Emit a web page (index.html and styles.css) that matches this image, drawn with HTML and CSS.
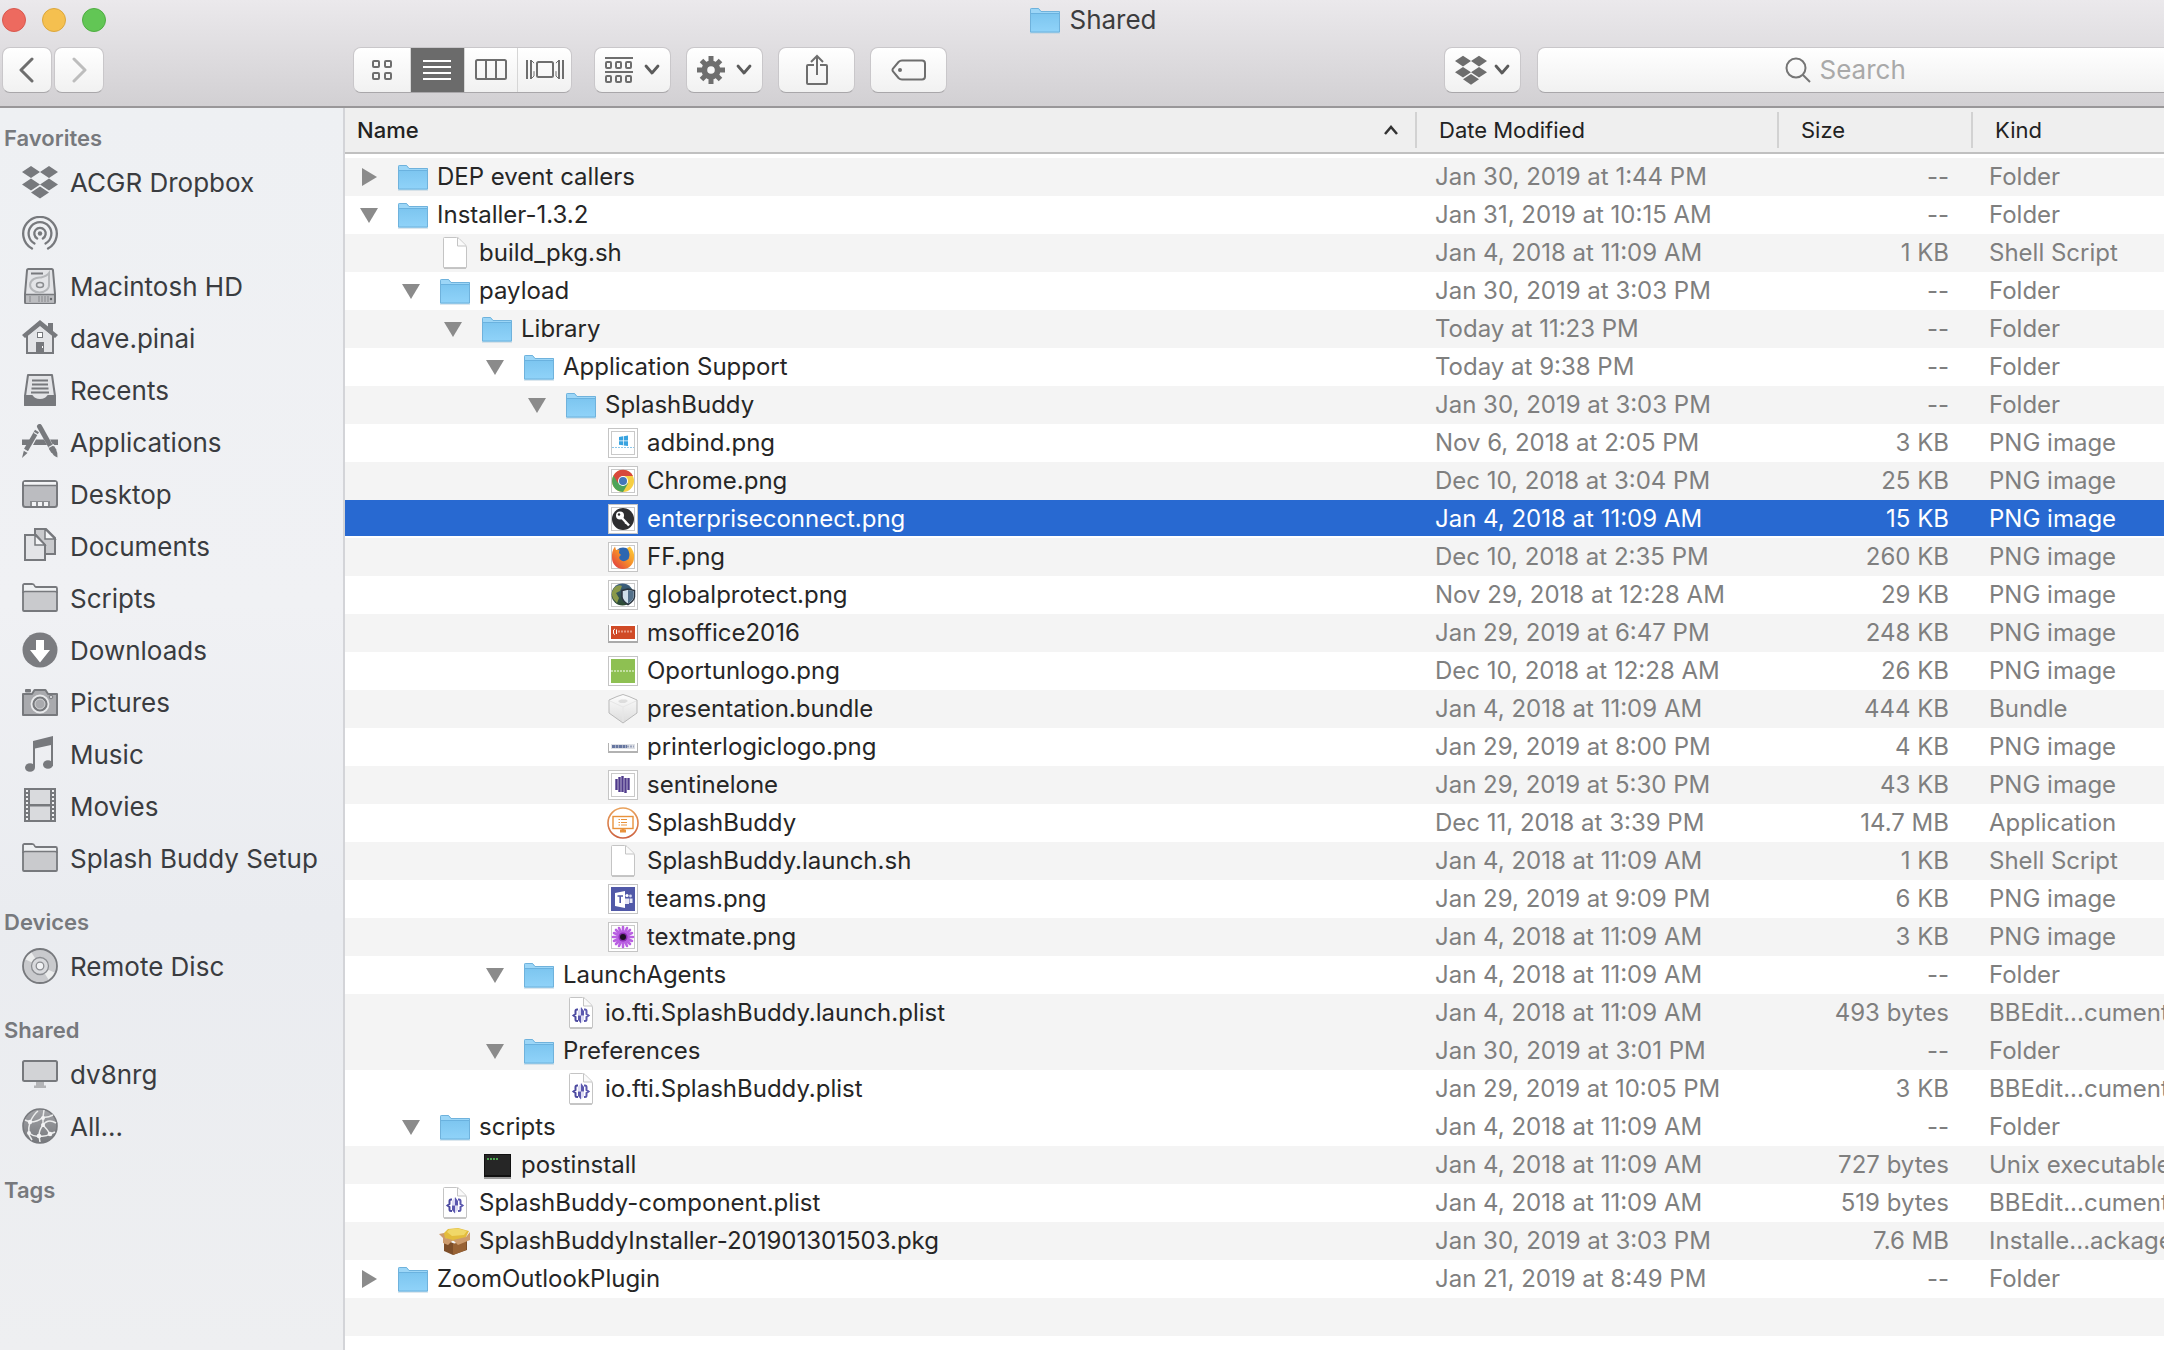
FILE: index.html
```html
<!DOCTYPE html>
<html lang="en">
<head>
<meta charset="utf-8">
<title>Shared</title>
<link rel="stylesheet" href="styles.css">
</head>
<body>
<svg class="sprite" aria-hidden="true">
  <defs>
    <linearGradient id="g-folder" x1="0" y1="0" x2="0" y2="1"><stop offset="0" stop-color="#7cc5ef"/><stop offset="1" stop-color="#90d3f9"/></linearGradient>
    <linearGradient id="g-ff" x1="1" y1="0" x2="0" y2="1"><stop offset="0" stop-color="#ffd53a"/><stop offset=".5" stop-color="#f58a2a"/><stop offset="1" stop-color="#dd2f45"/></linearGradient>
    <linearGradient id="g-globe" x1="0" y1="0" x2="0" y2="1"><stop offset="0" stop-color="#3c5f83"/><stop offset="1" stop-color="#2c4a2e"/></linearGradient>
    <linearGradient id="g-cube" x1="0" y1="0" x2="0" y2="1"><stop offset="0" stop-color="#fdfdfd"/><stop offset="1" stop-color="#dcdcdc"/></linearGradient>
    <linearGradient id="g-sb" x1="0" y1="0" x2="0" y2="1"><stop offset="0" stop-color="#e9a15a"/><stop offset="1" stop-color="#cd6240"/></linearGradient>
    <linearGradient id="g-net" x1="0" y1="0" x2="0" y2="1"><stop offset="0" stop-color="#a3a4a8"/><stop offset="1" stop-color="#77797d"/></linearGradient>
    <symbol id="folder" viewBox="0 0 32 32">
      <path d="M1 28.500H31V29.500H1z" fill="#b9cfdc"/>
      <path d="M1 5.500Q1 4 2.500 4H9.500L12 7H30Q31 7 31 8V28H1z" fill="#9cd6f7"/>
      <path d="M1 9H31V27.500Q31 28.500 30 28.500H2Q1 28.500 1 27.500z" fill="url(#g-folder)"/>
      <path d="M1.500 28V5.500Q1.500 4.500 2.500 4.500H9.500L12 7.500H30.500V28z" fill="none" stroke="#6fb2dc"/>
      <path d="M2 9.500H30" stroke="#6ab2df"/>
    </symbol>
    <symbol id="doc" viewBox="0 0 32 32">
      <path d="M4.500 1.500Q4.500 .5 5.500 .5H17.500Q19 .5 20 1.500L26.500 8Q27.500 9 27.500 11V30Q27.500 31 26.500 31H5.500Q4.500 31 4.500 30z" fill="#fff" stroke="#c4c4c4"/>
      <path d="M18.500 1V9H27" fill="#fafafa" stroke="#c4c4c4"/>
      <path d="M5 31H27" stroke="#aaa"/>
    </symbol>
    <symbol id="plist" viewBox="0 0 32 32">
      <use href="#doc"/>
      <path d="M13 12.500H12Q10.500 12.500 10.500 14V17L8.500 18.500L10.500 20V22.500Q10.500 24 12 24H13" fill="none" stroke="#4b499f" stroke-width="2"/>
      <path d="M19 12.500H20Q21.500 12.500 21.500 14V17L23.500 18.500L21.500 20V22.500Q21.500 24 20 24H19" fill="none" stroke="#5a57ae" stroke-width="2"/>
      <path d="M16 10L13 14V18.500H16zM16 18.500H19V23L16 26.500z" fill="#dcdbf3"/>
      <path d="M16 10L19 14V18.500H16zM13 18.500H16V26.500L13 23z" fill="#5a57ae"/>
    </symbol>
    <symbol id="frame" viewBox="0 0 32 32">
      <rect x="1" y="2" width="30" height="29" rx="1" fill="#000" opacity=".2"/>
      <rect x="1" y="30" width="30" height="1" fill="#777"/>
      <rect x="2" y="2" width="28" height="28" fill="#fff"/>
      <rect x="1.500" y="1.500" width="29" height="29" fill="none" stroke="#c5c5c5"/>
      <rect x="4.500" y="4.500" width="23" height="23" fill="none" stroke="#c9c9c9"/>
    </symbol>
    <symbol id="adbind" viewBox="0 0 32 32"><use href="#frame"/><path d="M12 10L16 9.300V13.500H12zM16.700 9.200L21 8.500V13.500H16.700zM12 14.200H16V18.300L12 17.700zM16.700 14.200H21V19L16.700 18.400z" fill="#38a3e0"/><path d="M5 20.500H27" stroke="#8cc7ea" stroke-dasharray="2 1"/></symbol>
    <symbol id="chrome" viewBox="0 0 32 32"><use href="#frame"/>
      <circle cx="16" cy="16" r="11" fill="#f6cf42"/>
      <path d="M16 16L6.500 10.500A11 11 0 0 0 16 27L21 18.500z" fill="#4ea35a"/>
      <path d="M6.500 10.500A11 11 0 0 1 26 11H16L11 18z" fill="#d8483b"/>
      <circle cx="16" cy="16" r="5" fill="#fff"/><circle cx="16" cy="16" r="4" fill="#4477b8"/></symbol>
    <symbol id="keyicon" viewBox="0 0 32 32"><use href="#frame"/><circle cx="16" cy="16" r="11" fill="#2e2e30"/><circle cx="13" cy="12.500" r="4" fill="#fff"/><circle cx="12" cy="11.500" r="1.200" fill="#2e2e30"/><path d="M14.500 14.500L22 22.500" stroke="#fff" stroke-width="2.500"/><path d="M18 20.500L19.500 19" stroke="#fff" stroke-width="1.500"/></symbol>
    <symbol id="firefox" viewBox="0 0 32 32"><use href="#frame"/>
      <circle cx="16" cy="15" r="8.500" fill="#2c66b0"/>
      <path d="M8 5.500L9 9L12.500 8.500L12 12L14 14Q11 16 13 18.500Q17 22 21.500 18Q24 13 20 7Q22 6 23 5.500Q28 11 27 17A11 11 0 0 1 5 17Q4.500 10 8 5.500z" fill="url(#g-ff)"/></symbol>
    <symbol id="globe-shield" viewBox="0 0 32 32"><use href="#frame"/>
      <circle cx="15.500" cy="15.500" r="11" fill="url(#g-globe)"/>
      <path d="M7 9Q11 5 15 7L13 12L9 14L12 19L10 24Q4 19 5 13z" fill="#8a994a"/>
      <path d="M15 11.500L21 10L27.500 11.500V18Q27 22 21 25.500Q15.500 22 15 18z" fill="#cfe0ea" stroke="#2b3540" stroke-width="1.500"/><path d="M21 11V24.500Q26 21 26.500 18V12z" fill="#54718a"/></symbol>
    <symbol id="office" viewBox="0 0 32 32">
      <rect x="1" y="8" width="30" height="18" fill="#000" opacity=".3"/><rect x="2" y="7" width="28" height="17" fill="#fff"/>
      <rect x="4" y="9" width="24" height="13" fill="#d04a26"/><path d="M8 12L6.500 13V16.500L8 17.500M9.500 12.500V17" stroke="#fff" fill="none"/><path d="M11 14.500H26" stroke="#e89a84" stroke-width="2" stroke-dasharray="2 1"/></symbol>
    <symbol id="oportun" viewBox="0 0 32 32"><use href="#frame"/><rect x="4" y="4" width="24" height="24" fill="#8ec052"/><path d="M4 16H28" stroke="#c3dfa2" stroke-width="2" stroke-dasharray="2 1"/></symbol>
    <symbol id="bundle" viewBox="0 0 32 32">
      <path d="M2 7L10 3.500L16 1.500L22 3.500L30 7V20L16 30L2 20z" fill="url(#g-cube)" stroke="#b9b9b9" stroke-linejoin="round"/>
      <path d="M3 8L16 14L29 8M16 14V29" fill="none" stroke="#e6e6e6"/><path d="M11 8L14 6.500H19L21 8L18 10H13z" fill="#ddd"/></symbol>
    <symbol id="printer" viewBox="0 0 32 32"><rect x="1" y="12" width="30" height="10" fill="#000" opacity=".3"/><rect x="2" y="11" width="28" height="9" fill="#fff"/><rect x="4" y="13" width="24" height="5" fill="#dfe1e6"/><path d="M5 15.500H20" stroke="#6676a0" stroke-width="3" stroke-dasharray="3 .5"/><path d="M20 15.500H27" stroke="#9ba5bd" stroke-width="2" stroke-dasharray="2 1"/></symbol>
    <symbol id="sentinel" viewBox="0 0 32 32"><use href="#frame"/><path d="M9.500 10V21M12.500 8V23M15.500 7V23M18.500 9V24M21.500 9V21" stroke="#4f3a8b" stroke-width="2.400"/></symbol>
    <symbol id="splash" viewBox="0 0 32 32"><circle cx="16" cy="16" r="15" fill="#fff" stroke="url(#g-sb)" stroke-width="1.600"/><rect x="6" y="9.500" width="20" height="12" fill="none" stroke="#e8923c" stroke-width="1.400"/><path d="M13 24H19M16 22V25" stroke="#e8923c" stroke-width="3"/><path d="M11.500 12.500H13M14 12.500H20M11.500 15.500H13M14 15.500H20M11.500 18H13M14 18H20" stroke="#e8923c"/></symbol>
    <symbol id="teams" viewBox="0 0 32 32"><use href="#frame"/><rect x="4" y="4" width="24" height="24" fill="#5159a8"/><path d="M8 10L18 8V25L8 23z" fill="#fff"/><path d="M10.500 13H16M13.200 13V20" stroke="#5159a8" stroke-width="1.600"/><circle cx="20" cy="12.500" r="1.600" fill="#fff"/><circle cx="23.500" cy="13" r="1.400" fill="#d5d7ee"/><path d="M18 15.500H22V21H18zM22.500 15.500H25.500V20H22.500z" fill="#e7e8f6"/></symbol>
    <symbol id="flower" viewBox="0 0 32 32"><use href="#frame"/><g stroke="#b95fe2" stroke-width="2.600" stroke-linecap="round"><path d="M16 6V26M6 16H26M9 9L23 23M23 9L9 23M12 7L20 25M20 7L12 25M7 12L25 20M7 20L25 12"/></g><circle cx="16" cy="16" r="4.500" fill="#8a2db4"/><circle cx="16" cy="16" r="3" fill="#1e1024"/></symbol>
    <symbol id="exec" viewBox="0 0 32 32"><rect x="3" y="6" width="27" height="24" fill="#9c9c9c"/><rect x="3" y="5" width="27" height="23" fill="#111"/><rect x="4" y="6" width="25" height="20" fill="#262626"/><path d="M6 10H17" stroke="#4fa653" stroke-width="2" stroke-dasharray="2 1"/></symbol>
    <symbol id="package" viewBox="0 0 32 32">
      <path d="M5 14L16 19L28 14V25L14 30L5 26z" fill="#7d4e29"/><path d="M14 19L27 15V25L14 30z" fill="#986234"/>
      <path d="M5 8L9 4L19 3L30 6L26 14L14 16L5 13z" fill="#e3bc3c"/><path d="M8 7L10 4.500L19 3.500L28 6L25 10L13 11z" fill="#f0d868"/>
      <path d="M0 9L5 8L6 13L14 15L9 20L4 18L4 13zM31 7L27 12L14 15L19 20L31 15z" fill="#cd9b6c"/></symbol>

    <symbol id="dropbox" viewBox="0 0 36 36"><path d="M9 2L18 8L9 14L0 8zM27 2L36 8L27 14L18 8zM9 14.500L18 20.500L9 26.500L0 20.500zM27 14.500L36 20.500L27 26.500L18 20.500zM18 22.500L27 28.500L18 34.500L9 28.500z" fill="currentColor"/></symbol>
    <symbol id="airdrop" viewBox="0 0 36 36"><circle cx="18" cy="17.500" r="2.200" fill="currentColor"/><g fill="none" stroke="currentColor" stroke-width="2.300" stroke-linecap="round"><path d="M15.200 22.500A5.700 5.700 0 1 1 20.800 22.500"/><path d="M12.500 27.500A11.400 11.400 0 1 1 23.500 27.500"/><path d="M10 32.500A16.800 16.800 0 1 1 26 32.500"/></g></symbol>
    <symbol id="drive" viewBox="0 0 36 36"><path d="M5 2.500Q5 1 6.500 1H29.500Q31 1 31 2.500L33 26V34Q33 35.500 31.500 35.500H4.500Q3 35.500 3 34V26z" fill="#e3e4e7" stroke="#77797d" stroke-width="2"/><path d="M4 27H32V34.500H4z" fill="#bcbdc0"/><path d="M3 26.500H33" stroke="#77797d" stroke-width="1.500"/><path d="M9 5.500H21" stroke="#77797d" stroke-width="2"/><path d="M27 5V16A9.500 7.500 0 1 1 19 9.500Q25 8 27 5z" fill="none" stroke="#b5b7ba" stroke-width="2"/><ellipse cx="18" cy="17" rx="3.500" ry="2.500" fill="none" stroke="#8c8e91" stroke-width="1.500"/><path d="M8 28V34M17 28V34M20 28V34M23 28V34M26 28V34" stroke="#88898d"/><circle cx="29" cy="31" r="1.200" fill="#66686c"/></symbol>
    <symbol id="home" viewBox="0 0 36 36"><path d="M5 15L18 4L31 15V33H5z" fill="#e3e4e7" stroke="#77797d" stroke-width="2"/><path d="M18 0L26 6.500V3H31V11L36 15L33 18L18 6L3 18L0 15z" fill="#77797d"/><rect x="15.500" y="12.500" width="5" height="5" fill="#fff" stroke="#77797d"/><path d="M14 22H22V33H14z" fill="#77797d"/><path d="M20.500 26V28" stroke="#fff"/></symbol>
    <symbol id="recents" viewBox="0 0 36 36"><path d="M6 3H30L33 24V33H3V24z" fill="#e3e4e7" stroke="#77797d" stroke-width="2" stroke-linejoin="round"/><path d="M10 8.500H26M10 12.500H26M9.500 16.500H26.500M9 20.500H27" stroke="#77797d" stroke-width="1.800"/><path d="M3 24H10Q12 28 18 28T26 24H33V33H3z" fill="#77797d" stroke="#77797d" stroke-width="2" stroke-linejoin="round"/></symbol>
    <symbol id="apps" viewBox="0 0 36 36"><path d="M0 15.500H8L5 21H0zM14 15.500H22L25 21H11zM28 15.500H36V21H31z" fill="#77797d"/><path d="M17.500 2.500L29 23" stroke="#77797d" stroke-width="5" stroke-linecap="round"/><path d="M29.500 23.500L32 27.500" stroke="#77797d" stroke-width="6"/><path d="M29 27L34 25.500Q36 29 35.500 33.500Q31 32 29 27z" fill="#77797d"/><path d="M15 7L4 26" stroke="#77797d" stroke-width="4.500"/><path d="M2 26L6 28.500L0 34z" fill="#77797d"/><path d="M12 8.500L17 11.500M26.500 23.500L32 20.500M1.500 26L6 28.500" stroke="#eef0f3" stroke-width="1.200"/></symbol>
    <symbol id="desktop" viewBox="0 0 36 36"><rect x="1" y="5" width="34" height="26" rx="2.500" fill="#bbbcc0" stroke="#77797d" stroke-width="2"/><path d="M2 6H34V9H2z" fill="#f3f4f6"/><path d="M1 9.500H35" stroke="#77797d" stroke-width="1.600"/><path d="M8 30V25H28V30z" fill="#8a8c90"/><path d="M10 26H14V30H10zM16 26H20V30H16zM22 26H26V30H22z" fill="#f3f4f6"/></symbol>
    <symbol id="documents" viewBox="0 0 36 36"><path d="M13 1H24L33 10V26H13z" fill="#c9cacd" stroke="#77797d" stroke-width="2"/><path d="M23 1V11H33z" fill="#f3f4f6" stroke="#77797d" stroke-width="1.500"/><path d="M3 7H14L23 17V32H3z" fill="#e3e4e7" stroke="#77797d" stroke-width="2"/><path d="M13 7V17H23z" fill="#f3f4f6" stroke="#77797d" stroke-width="1.500"/></symbol>
    <symbol id="sfolder" viewBox="0 0 36 36"><path d="M1 30V5.500Q1 4 2.500 4H10Q12 4 12.500 6Q13 7 14.500 7H33.500Q35 7 35 8.500V30Q35 31 34 31H2Q1 31 1 30z" fill="#c9cacd" stroke="#77797d" stroke-width="1.800"/><path d="M2 5H11L13 8H34V11H2z" fill="#eef0f2"/><path d="M1 13Q1 11.500 3 11.500H33Q35 11.500 35 13" fill="none" stroke="#77797d" stroke-width="1.600"/></symbol>
    <symbol id="downloads" viewBox="0 0 36 36"><circle cx="18" cy="18" r="17.500" fill="#7b7c80"/><path d="M14 8H22V18H28L18 30.500L8 18H14z" fill="#fff"/></symbol>
    <symbol id="camera" viewBox="0 0 36 36"><path d="M4 6H8V7.500H4zM1 10H10L12.500 6H23.500L26 10H35V31H1z" fill="#a9aaae" stroke="#77797d" stroke-width="2" stroke-linejoin="round"/><circle cx="18" cy="20" r="8.500" fill="#77797d" stroke="#e8e9eb" stroke-width="1.800"/><circle cx="18" cy="20" r="5" fill="#a9aaae" stroke="#d5d6d8"/><circle cx="29" cy="13" r="1.800" fill="#d0d1d4" stroke="#77797d"/></symbol>
    <symbol id="music" viewBox="0 0 36 36"><path d="M11 5L31 0V30H29V9L13 12.500V31H11z" fill="#77797d"/><ellipse cx="8" cy="31.500" rx="5" ry="4.300" fill="#77797d"/><ellipse cx="26" cy="28.500" rx="5" ry="4.300" fill="#77797d"/></symbol>
    <symbol id="movies" viewBox="0 0 36 36"><path d="M2 0H34V34H2z" fill="#77797d"/><path d="M8 2H28V16H8zM8 18.500H28V32H8z" fill="#d9dadd"/><path d="M5 2V33M31 2V33" stroke="#f0f1f3" stroke-width="2" stroke-dasharray="2 2"/></symbol>
    <symbol id="disc" viewBox="0 0 36 36"><circle cx="18" cy="18" r="17" fill="#c9cacd" stroke="#77797d" stroke-width="1.800"/><path d="M18 18L3.500 11.500A16 16 0 0 1 9.500 4.500zM18 18L32.500 24.500A16 16 0 0 1 26.500 31.500z" fill="#eceded"/><circle cx="18" cy="18" r="8.500" fill="#d9dadd" stroke="#8b8d91" stroke-width="1.300"/><circle cx="18" cy="18" r="3.800" fill="#f1f2f4" stroke="#8b8d91" stroke-width="1.300"/></symbol>
    <symbol id="display" viewBox="0 0 36 36"><rect x="1" y="5" width="34" height="20" rx="1.500" fill="#d2d3d6" stroke="#77797d" stroke-width="2"/><path d="M14 26H22V29.500H24V32H12V29.500H14z" fill="#b3b4b7"/></symbol>
    <symbol id="network" viewBox="0 0 36 36"><circle cx="18" cy="18" r="17" fill="url(#g-net)" stroke="#77797d" stroke-width="1.600"/><path d="M3 12L8 14Q16 14 21 9L22 2M8 14Q12 6 16 3M8 14Q6 20 7 27L10 32M21 9Q25 10 31 7M21 9L21 17Q26 10 34 15M21 17Q17 22 17 28L18 34M21 17Q25 21 28 26L33 24M7 25Q12 29 17 28Q24 29 28 26" fill="none" stroke="#eceded" stroke-width="1.500"/><g fill="#f3f3f4"><circle cx="8" cy="14" r="2.200"/><circle cx="21" cy="10" r="2"/><circle cx="21" cy="17" r="2"/><circle cx="7" cy="25" r="2"/><circle cx="17" cy="28" r="2.300"/><circle cx="28" cy="26" r="2.300"/></g></symbol>

    <symbol id="tri-down" viewBox="0 0 18 18"><path d="M0 2H18L9 17z" fill="#8b8b8b"/></symbol>
    <symbol id="tri-right" viewBox="0 0 18 18"><path d="M2 0L17 9L2 18z" fill="#8b8b8b"/></symbol>
    <symbol id="chev" viewBox="0 0 16 12"><path d="M2 2L8 9L14 2" fill="none" stroke="#5b5b5b" stroke-width="2.800" stroke-linecap="round" stroke-linejoin="round"/></symbol>
  </defs>
</svg>

<header class="titlebar">
  <div class="title-row">
    <div class="lights">
      <button class="light light-close" aria-label="Close"></button>
      <button class="light light-min" aria-label="Minimize"></button>
      <button class="light light-zoom" aria-label="Zoom"></button>
    </div>
    <h1 class="title"><svg class="file-icon" aria-hidden="true"><use href="#folder"/></svg>Shared</h1>
  </div>
  <div class="toolbar">
    <div class="history">
      <button class="tool nav-button" aria-label="Back"><svg width="16" height="26" viewBox="0 0 16 26"><path d="M13 2L2 13L13 24" fill="none" stroke="#6e6e6e" stroke-width="3" stroke-linecap="round" stroke-linejoin="round"/></svg></button>
      <button class="tool nav-button" aria-label="Forward" disabled><svg width="16" height="26" viewBox="0 0 16 26"><path d="M3 2L14 13L3 24" fill="none" stroke="#bdbdbd" stroke-width="3" stroke-linecap="round" stroke-linejoin="round"/></svg></button>
    </div>
    <div class="views">
      <button class="view" aria-label="Icon view"><svg width="22" height="22" viewBox="0 0 22 22" fill="none" stroke="#6e6e6e" stroke-width="2"><rect x="2" y="2" width="6" height="6" rx="1"/><rect x="14" y="2" width="6" height="6" rx="1"/><rect x="2" y="14" width="6" height="6" rx="1"/><rect x="14" y="14" width="6" height="6" rx="1"/></svg></button>
      <button class="view view-on" aria-label="List view" aria-pressed="true"><svg width="28" height="22" viewBox="0 0 28 22" stroke="#fff" stroke-width="2"><path d="M0 2H28M0 8H28M0 14H28M0 20H28"/></svg></button>
      <button class="view" aria-label="Column view"><svg width="32" height="22" viewBox="0 0 32 22" fill="none" stroke="#6e6e6e" stroke-width="2"><rect x="1" y="1" width="30" height="19" rx="1.500"/><path d="M11 1V20M21 1V20"/></svg></button>
      <button class="view" aria-label="Gallery view"><svg width="38" height="22" viewBox="0 0 38 22" fill="none" stroke="#6e6e6e" stroke-width="2"><rect x="11" y="3" width="16" height="15" rx="1.500"/><path d="M1 1V20M5 1V20M37 1V20M33 1V20"/><path d="M6 2L8 4V17L6 19M32 2L30 4V17L32 19" stroke-width="1" stroke-dasharray="3 8 8"/></svg></button>
    </div>
    <div class="actions">
      <button class="tool" aria-label="Group items"><svg width="28" height="28" viewBox="0 0 28 28" fill="none" stroke="#6e6e6e" stroke-width="2"><path d="M0 2H28M0 16H28"/><rect x="1" y="6" width="5" height="6" rx="1"/><rect x="11" y="6" width="5" height="6" rx="1"/><rect x="21" y="6" width="5" height="6" rx="1"/><rect x="1" y="20" width="5" height="6" rx="1"/><rect x="11" y="20" width="5" height="6" rx="1"/><rect x="21" y="20" width="5" height="6" rx="1"/></svg><svg class="chevron"><use href="#chev"/></svg></button>
      <button class="tool" aria-label="Actions"><svg width="28" height="28" viewBox="0 0 28 28"><g stroke="#6e6e6e" stroke-width="5"><path d="M14 0V28M0 14H28M4.500 4.500L23.500 23.500M23.500 4.500L4.500 23.500"/></g><circle cx="14" cy="14" r="9.500" fill="#6e6e6e"/><circle cx="14" cy="14" r="3.800" fill="#f8f8f8"/></svg><svg class="chevron"><use href="#chev"/></svg></button>
      <button class="tool" aria-label="Share"><svg width="24" height="32" viewBox="0 0 24 32" fill="none" stroke="#6e6e6e" stroke-width="2"><path d="M9 11H3Q2 11 2 12V29Q2 30 3 30H21Q22 30 22 29V12Q22 11 21 11H15M12 21V2M6 8L12 2L18 8"/></svg></button>
      <button class="tool" aria-label="Edit tags"><svg width="36" height="22" viewBox="0 0 36 22"><path d="M11 1.500H31Q34 1.500 34 4.500V17.500Q34 20.500 31 20.500H11Q9 20.500 7.500 19L2 12.500Q1 11 2 9.500L7.500 3Q9 1.500 11 1.500z" fill="none" stroke="#6e6e6e" stroke-width="2"/><circle cx="9" cy="11" r="2" fill="#6e6e6e"/></svg></button>
    </div>
    <button class="tool tool-dropbox" aria-label="Dropbox"><svg class="box-icon"><use href="#dropbox"/></svg><svg class="chevron"><use href="#chev"/></svg></button>
    <label class="search">
      <svg width="26" height="26" viewBox="0 0 26 26" fill="none" stroke="#757575" stroke-width="2" aria-hidden="true"><circle cx="11" cy="11" r="9.500"/><path d="M18 18L25 25"/></svg>
      <input class="search-input" type="text" placeholder="Search" aria-label="Search">
    </label>
  </div>
</header>

<div class="window">
  <nav class="sidebar" aria-label="Sidebar">
    <h2 class="group">Favorites</h2>
    <a class="place" href="#"><svg><use href="#dropbox"/></svg>ACGR Dropbox</a>
    <a class="place" href="#" aria-label="AirDrop"><svg><use href="#airdrop"/></svg></a>
    <a class="place" href="#"><svg><use href="#drive"/></svg>Macintosh HD</a>
    <a class="place" href="#"><svg><use href="#home"/></svg>dave.pinai</a>
    <a class="place" href="#"><svg><use href="#recents"/></svg>Recents</a>
    <a class="place" href="#"><svg><use href="#apps"/></svg>Applications</a>
    <a class="place" href="#"><svg><use href="#desktop"/></svg>Desktop</a>
    <a class="place" href="#"><svg><use href="#documents"/></svg>Documents</a>
    <a class="place" href="#"><svg><use href="#sfolder"/></svg>Scripts</a>
    <a class="place" href="#"><svg><use href="#downloads"/></svg>Downloads</a>
    <a class="place" href="#"><svg><use href="#camera"/></svg>Pictures</a>
    <a class="place" href="#"><svg><use href="#music"/></svg>Music</a>
    <a class="place" href="#"><svg><use href="#movies"/></svg>Movies</a>
    <a class="place" href="#"><svg><use href="#sfolder"/></svg>Splash Buddy Setup</a>
    <h2 class="group">Devices</h2>
    <a class="place" href="#"><svg><use href="#disc"/></svg>Remote Disc</a>
    <h2 class="group">Shared</h2>
    <a class="place" href="#"><svg><use href="#display"/></svg>dv8nrg</a>
    <a class="place" href="#"><svg><use href="#network"/></svg>All...</a>
    <h2 class="group">Tags</h2>
  </nav>

  <main class="listing">
    <table class="files">
      <colgroup><col><col class="col-date"><col class="col-size"><col class="col-kind"></colgroup>
      <thead>
        <tr><th class="th-name" scope="col" aria-sort="ascending"><span class="th-sort">Name<svg width="16" height="12" viewBox="0 0 16 12" aria-hidden="true"><path d="M2 10L8 3L14 10" fill="none" stroke="#333" stroke-width="2.500"/></svg></span></th><th scope="col">Date Modified</th><th scope="col">Size</th><th scope="col">Kind</th></tr>
      </thead>
      <tbody>
        <tr class="alt"><td><div class="name"><button class="toggle" aria-label="Expand"><svg><use href="#tri-right"/></svg></button><svg class="file-icon"><use href="#folder"/></svg>DEP event callers</div></td><td>Jan 30, 2019 at 1:44 PM</td><td>--</td><td>Folder</td></tr>
        <tr><td><div class="name"><button class="toggle" aria-label="Collapse"><svg><use href="#tri-down"/></svg></button><svg class="file-icon"><use href="#folder"/></svg>Installer-1.3.2</div></td><td>Jan 31, 2019 at 10:15 AM</td><td>--</td><td>Folder</td></tr>
        <tr class="alt"><td><div class="name leaf level-1"><svg class="file-icon"><use href="#doc"/></svg>build_pkg.sh</div></td><td>Jan 4, 2018 at 11:09 AM</td><td>1 KB</td><td>Shell Script</td></tr>
        <tr><td><div class="name level-1"><button class="toggle" aria-label="Collapse"><svg><use href="#tri-down"/></svg></button><svg class="file-icon"><use href="#folder"/></svg>payload</div></td><td>Jan 30, 2019 at 3:03 PM</td><td>--</td><td>Folder</td></tr>
        <tr class="alt"><td><div class="name level-2"><button class="toggle" aria-label="Collapse"><svg><use href="#tri-down"/></svg></button><svg class="file-icon"><use href="#folder"/></svg>Library</div></td><td>Today at 11:23 PM</td><td>--</td><td>Folder</td></tr>
        <tr><td><div class="name level-3"><button class="toggle" aria-label="Collapse"><svg><use href="#tri-down"/></svg></button><svg class="file-icon"><use href="#folder"/></svg>Application Support</div></td><td>Today at 9:38 PM</td><td>--</td><td>Folder</td></tr>
        <tr class="alt"><td><div class="name level-4"><button class="toggle" aria-label="Collapse"><svg><use href="#tri-down"/></svg></button><svg class="file-icon"><use href="#folder"/></svg>SplashBuddy</div></td><td>Jan 30, 2019 at 3:03 PM</td><td>--</td><td>Folder</td></tr>
        <tr><td><div class="name leaf level-5"><svg class="file-icon"><use href="#adbind"/></svg>adbind.png</div></td><td>Nov 6, 2018 at 2:05 PM</td><td>3 KB</td><td>PNG image</td></tr>
        <tr class="alt"><td><div class="name leaf level-5"><svg class="file-icon"><use href="#chrome"/></svg>Chrome.png</div></td><td>Dec 10, 2018 at 3:04 PM</td><td>25 KB</td><td>PNG image</td></tr>
        <tr class="selected" aria-selected="true"><td><div class="name leaf level-5"><svg class="file-icon"><use href="#keyicon"/></svg>enterpriseconnect.png</div></td><td>Jan 4, 2018 at 11:09 AM</td><td>15 KB</td><td>PNG image</td></tr>
        <tr class="alt"><td><div class="name leaf level-5"><svg class="file-icon"><use href="#firefox"/></svg>FF.png</div></td><td>Dec 10, 2018 at 2:35 PM</td><td>260 KB</td><td>PNG image</td></tr>
        <tr><td><div class="name leaf level-5"><svg class="file-icon"><use href="#globe-shield"/></svg>globalprotect.png</div></td><td>Nov 29, 2018 at 12:28 AM</td><td>29 KB</td><td>PNG image</td></tr>
        <tr class="alt"><td><div class="name leaf level-5"><svg class="file-icon"><use href="#office"/></svg>msoffice2016</div></td><td>Jan 29, 2019 at 6:47 PM</td><td>248 KB</td><td>PNG image</td></tr>
        <tr><td><div class="name leaf level-5"><svg class="file-icon"><use href="#oportun"/></svg>Oportunlogo.png</div></td><td>Dec 10, 2018 at 12:28 AM</td><td>26 KB</td><td>PNG image</td></tr>
        <tr class="alt"><td><div class="name leaf level-5"><svg class="file-icon"><use href="#bundle"/></svg>presentation.bundle</div></td><td>Jan 4, 2018 at 11:09 AM</td><td>444 KB</td><td>Bundle</td></tr>
        <tr><td><div class="name leaf level-5"><svg class="file-icon"><use href="#printer"/></svg>printerlogiclogo.png</div></td><td>Jan 29, 2019 at 8:00 PM</td><td>4 KB</td><td>PNG image</td></tr>
        <tr class="alt"><td><div class="name leaf level-5"><svg class="file-icon"><use href="#sentinel"/></svg>sentinelone</div></td><td>Jan 29, 2019 at 5:30 PM</td><td>43 KB</td><td>PNG image</td></tr>
        <tr><td><div class="name leaf level-5"><svg class="file-icon"><use href="#splash"/></svg>SplashBuddy</div></td><td>Dec 11, 2018 at 3:39 PM</td><td>14.7 MB</td><td>Application</td></tr>
        <tr class="alt"><td><div class="name leaf level-5"><svg class="file-icon"><use href="#doc"/></svg>SplashBuddy.launch.sh</div></td><td>Jan 4, 2018 at 11:09 AM</td><td>1 KB</td><td>Shell Script</td></tr>
        <tr><td><div class="name leaf level-5"><svg class="file-icon"><use href="#teams"/></svg>teams.png</div></td><td>Jan 29, 2019 at 9:09 PM</td><td>6 KB</td><td>PNG image</td></tr>
        <tr class="alt"><td><div class="name leaf level-5"><svg class="file-icon"><use href="#flower"/></svg>textmate.png</div></td><td>Jan 4, 2018 at 11:09 AM</td><td>3 KB</td><td>PNG image</td></tr>
        <tr><td><div class="name level-3"><button class="toggle" aria-label="Collapse"><svg><use href="#tri-down"/></svg></button><svg class="file-icon"><use href="#folder"/></svg>LaunchAgents</div></td><td>Jan 4, 2018 at 11:09 AM</td><td>--</td><td>Folder</td></tr>
        <tr class="alt"><td><div class="name leaf level-4"><svg class="file-icon"><use href="#plist"/></svg>io.fti.SplashBuddy.launch.plist</div></td><td>Jan 4, 2018 at 11:09 AM</td><td>493 bytes</td><td>BBEdit...cument</td></tr>
        <tr class="alt"><td><div class="name level-3"><button class="toggle" aria-label="Collapse"><svg><use href="#tri-down"/></svg></button><svg class="file-icon"><use href="#folder"/></svg>Preferences</div></td><td>Jan 30, 2019 at 3:01 PM</td><td>--</td><td>Folder</td></tr>
        <tr><td><div class="name leaf level-4"><svg class="file-icon"><use href="#plist"/></svg>io.fti.SplashBuddy.plist</div></td><td>Jan 29, 2019 at 10:05 PM</td><td>3 KB</td><td>BBEdit...cument</td></tr>
        <tr><td><div class="name level-1"><button class="toggle" aria-label="Collapse"><svg><use href="#tri-down"/></svg></button><svg class="file-icon"><use href="#folder"/></svg>scripts</div></td><td>Jan 4, 2018 at 11:09 AM</td><td>--</td><td>Folder</td></tr>
        <tr class="alt"><td><div class="name leaf level-2"><svg class="file-icon"><use href="#exec"/></svg>postinstall</div></td><td>Jan 4, 2018 at 11:09 AM</td><td>727 bytes</td><td>Unix executable</td></tr>
        <tr><td><div class="name leaf level-1"><svg class="file-icon"><use href="#plist"/></svg>SplashBuddy-component.plist</div></td><td>Jan 4, 2018 at 11:09 AM</td><td>519 bytes</td><td>BBEdit...cument</td></tr>
        <tr class="alt"><td><div class="name leaf level-1"><svg class="file-icon"><use href="#package"/></svg>SplashBuddyInstaller-201901301503.pkg</div></td><td>Jan 30, 2019 at 3:03 PM</td><td>7.6 MB</td><td>Installe...ackage</td></tr>
        <tr><td><div class="name"><button class="toggle" aria-label="Expand"><svg><use href="#tri-right"/></svg></button><svg class="file-icon"><use href="#folder"/></svg>ZoomOutlookPlugin</div></td><td>Jan 21, 2019 at 8:49 PM</td><td>--</td><td>Folder</td></tr>
        <tr class="alt"><td colspan="4"></td></tr>
      </tbody>
    </table>
  </main>
</div>
</body>
</html>
```
FILE: styles.css
```css
* { box-sizing: border-box; }

body {
  margin: 0;
  min-height: 100vh;
  display: flex;
  flex-direction: column;
  font-family: Inter, "Liberation Sans", sans-serif;
  color: #262626;
  background: #fff;
}

button {
  margin: 0;
  padding: 0;
  border: 0;
  background: none;
  font: inherit;
}

svg { flex: none; }
.sprite { position: absolute; width: 0; height: 0; }
.file-icon { width: 32px; height: 32px; }

/* Title bar and toolbar */
.titlebar {
  height: 108px;
  background: linear-gradient(#ebe9ec, #d2d0d3);
  border-bottom: 2px solid #999799;
}

.title-row {
  display: grid;
  grid-template-columns: 1fr auto 1fr;
  align-items: center;
  height: 40px;
}

.lights { display: flex; gap: 16px; padding-left: 2px; }
.light { width: 24px; height: 24px; border-radius: 50%; border: 1px solid; }
.light-close { background: #ed6a5f; border-color: #d9584e; }
.light-min { background: #f5c04f; border-color: #dca73c; }
.light-zoom { background: #62c655; border-color: #4fae42; }

.title {
  display: flex;
  align-items: center;
  gap: 8px;
  margin: 0 0 0 22px;
  font-size: 26px;
  font-weight: 400;
  line-height: 40px;
  color: #3c3c3e;
}

.toolbar { display: flex; align-items: center; padding: 7px 0 0 2px; }
.history { display: flex; gap: 2px; flex: 0 0 351px; }

.tool, .view {
  display: flex;
  align-items: center;
  justify-content: center;
  height: 46px;
  background: linear-gradient(#fff, #f1f1f1);
}

.tool {
  width: 77px;
  gap: 11px;
  border-radius: 8px;
  border: 1px solid #c9c7ca;
  border-bottom-color: #a9a7aa;
}

.nav-button { width: 50px; }
.chevron { width: 16px; height: 12px; }

.views {
  display: flex;
  width: 219px;
  border: 1px solid #c9c7ca;
  border-bottom-color: #a9a7aa;
  border-radius: 8px;
  overflow: hidden;
}
.view { flex: 1; height: 44px; border-left: 1px solid #d6d6d6; }
.view:first-child { flex: 0 0 56px; border-left: 0; }
.view-on { background: #6b6b6b; }

.actions { display: flex; gap: 15px; margin-left: 22px; }
.tool-dropbox { margin-left: auto; gap: 7px; }
.box-icon { width: 32px; height: 32px; color: #6e6e6e; }

.search {
  display: flex;
  align-items: center;
  justify-content: center;
  gap: 9px;
  width: 29%;
  height: 46px;
  margin-left: 16px;
  border: 1px solid #c9c7ca;
  border-bottom-color: #a9a7aa;
  border-right: 0;
  border-radius: 8px 0 0 8px;
  background: linear-gradient(#fff, #f1f1f1);
}
.search-input {
  width: 98px;
  padding: 0;
  border: 0;
  outline: 0;
  background: none;
  font: 26px/32px Inter, "Liberation Sans", sans-serif;
}
.search-input::placeholder { color: #a9a9a9; }

/* Sidebar */
.window { display: flex; flex: 1; }

.sidebar {
  flex: 0 0 345px;
  border-right: 2px solid #d3d4d8;
  background: linear-gradient(#eef0f3, #f0f1f4 40%, #eaecf0 65%, #eeeff1);
}

.group {
  margin: 0;
  padding: 18px 0 0 4px;
  font-size: 22px;
  font-weight: 600;
  line-height: 38px;
  color: #77797d;
}
.group:first-child { padding-top: 11px; }

.place {
  display: flex;
  align-items: center;
  gap: 12px;
  height: 52px;
  padding: 0 0 2px 22px;
  font-size: 26px;
  color: #3a3c40;
  text-decoration: none;
  white-space: nowrap;
}
.place svg { width: 36px; height: 36px; color: #77797d; }

/* File list */
.listing { flex: 1; min-width: 0; }

.files {
  width: 100%;
  table-layout: fixed;
  border-spacing: 0;
  font-size: 24px;
}
.col-date { width: 362px; }
.col-size { width: 194px; }
.col-kind { width: 193px; }

.files th {
  height: 46px;
  padding: 0 0 0 24px;
  border-bottom: 2px solid #c0c0c0;
  background: linear-gradient(#d2d2d2, #d2d2d2) left center / 2px 36px no-repeat #efefef;
  font-size: 22px;
  font-weight: 400;
  line-height: 36px;
  text-align: left;
  color: #222;
}
.files .th-name { padding: 0 16px 0 12px; background: #efefef; font-weight: 500; }
.th-sort { display: flex; align-items: center; justify-content: space-between; }

.files tbody::before { content: ""; display: block; height: 4px; }

.files td {
  height: 38px;
  padding: 0 0 0 20px;
  line-height: 38px;
  color: #7f7f7f;
  white-space: nowrap;
  overflow: hidden;
}
.files td:first-child { padding-left: 15px; color: #262626; }
.files td:nth-child(3) { padding: 0 22px 0 0; text-align: right; }
.files td:nth-child(4) { padding-left: 18px; }
.alt td { background: #f4f4f4; }

.files .selected td {
  background: linear-gradient(#2869d1 36px, #fff 36px);
  color: #fff;
}

.name { display: flex; align-items: center; height: 38px; }
.name .file-icon { margin-right: 8px; }
.leaf { padding-left: 37px; }
.level-1 { margin-left: 42px; }
.level-2 { margin-left: 84px; }
.level-3 { margin-left: 126px; }
.level-4 { margin-left: 168px; }
.level-5 { margin-left: 210px; }

.toggle { display: flex; width: 18px; height: 18px; margin-right: 19px; }
.toggle svg { width: 18px; height: 18px; }
```
